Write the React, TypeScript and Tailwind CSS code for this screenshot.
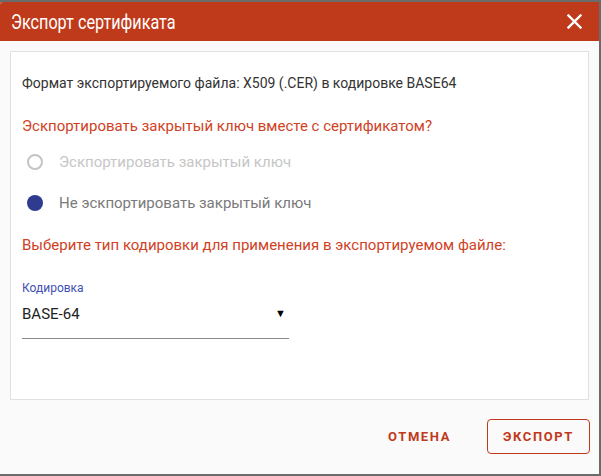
export default function App() {
  return (
    <div className="w-[601px] h-[476px] bg-[#6b6b6b] pt-[2px] pr-[2px] pb-[2px] font-['Roboto',sans-serif]">
      <div className="h-full flex flex-col bg-[#fafafa] rounded-tl-[3px] overflow-hidden">
        <div className="h-[39px] bg-[#bf3a1a] flex items-center justify-between pl-[11px] pr-[17px]">
          <span className="inline-block origin-left scale-x-[0.81] text-white text-[20px] leading-none whitespace-nowrap">
            Экспорт сертификата
          </span>
          <svg width="15" height="15" viewBox="0 0 15 15" className="block">
            <path d="M1.5 1.5 L13.5 13.5 M13.5 1.5 L1.5 13.5" stroke="white" strokeWidth="2.4" strokeLinecap="square" />
          </svg>
        </div>

        <div className="px-[10px] pt-[10px]">
          <div className="h-[349px] bg-white border border-[#e0e0e0] px-[11px] pt-[21px]">
            <p className="text-[14px] leading-[20px] text-[#333]">
              Формат экспортируемого файла: X509 (.CER) в кодировке BASE64
            </p>
            <p className="mt-[23px] text-[15px] leading-[20px] text-[#d0421f]">
              Эскпортировать закрытый ключ вместе с сертификатом?
            </p>
            <div className="mt-[16px] h-[20px] flex items-center">
              <span className="ml-[5px] w-[16px] h-[16px] rounded-full border-2 border-[#c4c4c4]" />
              <span className="ml-[16px] text-[15px] text-[#c6c6c6]">Эскпортировать закрытый ключ</span>
            </div>
            <div className="mt-[21px] h-[20px] flex items-center">
              <span className="ml-[5px] w-[16px] h-[16px] rounded-full bg-[#2e3b8e]" />
              <span className="ml-[16px] text-[15px] text-[#7a7a7a]">Не эскпортировать закрытый ключ</span>
            </div>
            <p className="mt-[22px] text-[15px] leading-[20px] text-[#d0421f]">
              Выберите тип кодировки для применения в экспортируемом файле:
            </p>
            <div className="mt-[26px] text-[12px] leading-[14px] text-[#3f51b5]">Кодировка</div>
            <div className="mt-[9px] w-[267px] pb-[14px] border-b border-[#8a8a8a] flex items-center justify-between">
              <span className="text-[15px] leading-[20px] text-[#222]">BASE-64</span>
              <span className="text-[11px] text-black mr-[3px]">▼</span>
            </div>
          </div>
        </div>

        <div className="flex items-center justify-end pr-[9px] pt-[19px]">
          <button className="mr-[36px] text-[13px] font-bold tracking-[1.6px] text-[#c0391b]">ОТМЕНА</button>
          <button className="w-[103px] h-[35px] rounded-[4px] border border-[#c0391b] text-[13px] font-bold tracking-[1.6px] text-[#c0391b]">
            ЭКСПОРТ
          </button>
        </div>
      </div>
    </div>
  );
}
